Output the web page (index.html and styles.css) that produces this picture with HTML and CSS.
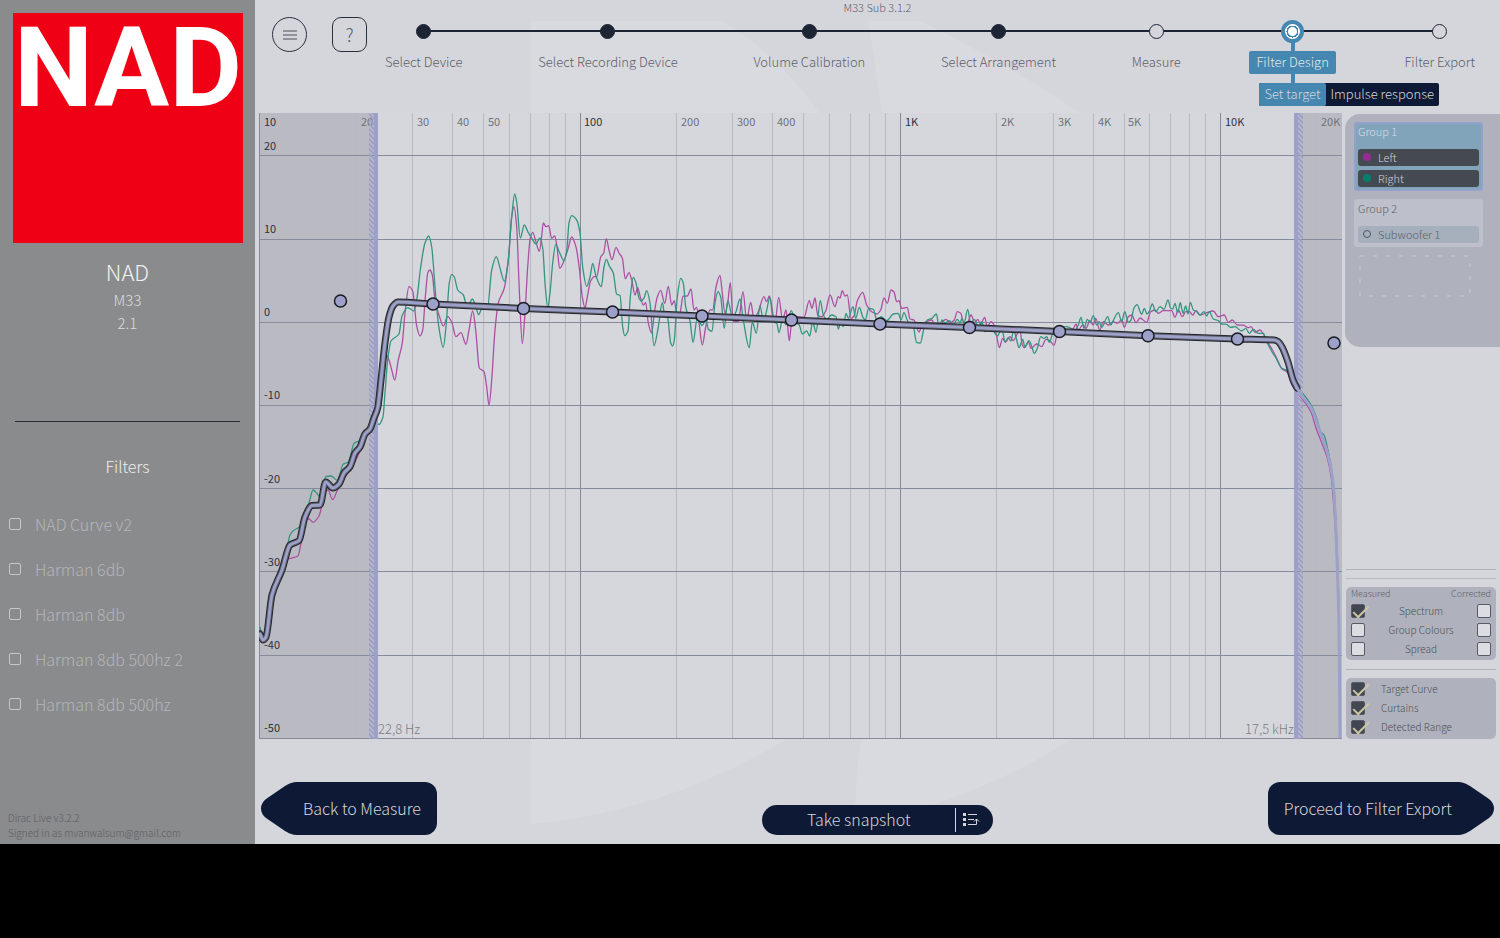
FILE: index.html
```html
<!DOCTYPE html>
<html lang="en">
<head>
<meta charset="utf-8">
<title>Dirac Live - Filter Design</title>
<link rel="stylesheet" href="styles.css">
</head>
<body>
<div class="app">
  <aside class="sidebar">
    <div class="logo" role="img" aria-label="NAD"><span class="logo-text">NAD</span></div>
    <h1 class="device-brand">NAD</h1>
    <p class="device-line">M33</p>
    <p class="device-line">2.1</p>
    <hr class="side-rule">
    <h2 class="filters-title">Filters</h2>
    <ul class="filters">
      <li><label class="filter"><input type="checkbox" class="filter-box"><span>NAD Curve v2</span></label></li>
      <li><label class="filter"><input type="checkbox" class="filter-box"><span>Harman 6db</span></label></li>
      <li><label class="filter"><input type="checkbox" class="filter-box"><span>Harman 8db</span></label></li>
      <li><label class="filter"><input type="checkbox" class="filter-box"><span>Harman 8db 500hz 2</span></label></li>
      <li><label class="filter"><input type="checkbox" class="filter-box"><span>Harman 8db 500hz</span></label></li>
    </ul>
    <footer class="account">Dirac Live v3.2.2<br>Signed in as mvanwalsum@gmail.com</footer>
  </aside>

  <main class="main">
    <svg class="watermark" viewBox="255 0 1245 844" preserveAspectRatio="none" aria-hidden="true">
      <path d="M531 21H722C830 85 905 230 905 410C905 570 860 690 785 740C700 790 620 815 531 824Z"/>
      <path d="M868 21H920C960 40 1030 78 1080 113C1190 190 1240 300 1240 420C1240 560 1170 680 1070 740C1010 778 930 812 855 824C855 790 858 760 861 740C910 520 910 260 868 21Z"/>
    </svg>

    <header class="header">
      <p class="project">M33 Sub 3.1.2</p>
      <div class="nav-row">
        <button class="round-btn round-btn--circle" aria-label="Menu">
          <svg width="16" height="10" viewBox="0 0 16 10"><path d="M1 1H15M1 5H15M1 9H15"/></svg>
        </button>
        <button class="round-btn" aria-label="Help">?</button>
        <ol class="steps">
          <li class="step"><span class="dot-area"><i class="dot dot--done"></i></span><a class="step-label" href="#device">Select Device</a></li>
          <li class="step"><span class="dot-area"><i class="dot dot--done"></i></span><a class="step-label" href="#recording">Select Recording Device</a></li>
          <li class="step"><span class="dot-area"><i class="dot dot--done"></i></span><a class="step-label" href="#volume">Volume Calibration</a></li>
          <li class="step"><span class="dot-area"><i class="dot dot--done"></i></span><a class="step-label" href="#arrangement">Select Arrangement</a></li>
          <li class="step"><span class="dot-area"><i class="dot"></i></span><a class="step-label" href="#measure">Measure</a></li>
          <li class="step step--active">
            <span class="dot-area"><i class="dot dot--active"></i></span><a class="step-label" href="#design" aria-current="step">Filter Design</a>
            <div class="tabs"><button class="tab tab--on">Set target</button><button class="tab">Impulse response</button></div>
          </li>
          <li class="step"><span class="dot-area"><i class="dot"></i></span><a class="step-label" href="#export">Filter Export</a></li>
        </ol>
      </div>
    </header>

    <div class="workspace">
      <svg class="chart" viewBox="259 113 1083 626" role="img" aria-label="Frequency response with target curve">
        <defs>
          <pattern id="hatch" width="5" height="5" patternUnits="userSpaceOnUse">
            <path d="M0 0L5 5M-1 4L1 6M4 -1L6 1" stroke="#9da1c9" stroke-width="2"/>
          </pattern>
        </defs>
        <rect class="shade" x="259" y="113" width="115" height="626"/>
        <rect class="shade" x="1298" y="113" width="44" height="626"/>
        <g id="grid"></g>
        <g class="labels">
          <text class="strong" x="264" y="126">10</text>
          <text x="361" y="126">20</text><text x="417" y="126">30</text><text x="457" y="126">40</text><text x="488" y="126">50</text>
          <text class="strong" x="584" y="126">100</text>
          <text x="681" y="126">200</text><text x="737" y="126">300</text><text x="777" y="126">400</text>
          <text class="strong" x="905" y="126">1K</text>
          <text x="1001" y="126">2K</text><text x="1058" y="126">3K</text><text x="1098" y="126">4K</text><text x="1128" y="126">5K</text>
          <text class="strong" x="1225" y="126">10K</text>
          <text x="1321" y="126">20K</text>
          <text class="strong" x="264" y="150">20</text><text class="strong" x="264" y="233">10</text><text class="strong" x="264" y="316">0</text>
          <text class="strong" x="264" y="399">-10</text><text class="strong" x="264" y="483">-20</text><text class="strong" x="264" y="566">-30</text>
          <text class="strong" x="264" y="649">-40</text><text class="strong" x="264" y="732">-50</text>
        </g>
        <path id="curve-left" class="curve curve--left"/>
        <path id="curve-right" class="curve curve--right"/>
        <rect x="369" y="113" width="5" height="626" fill="url(#hatch)"/>
        <rect class="curtain" x="374" y="113" width="4" height="626"/>
        <rect class="curtain" x="1294" y="113" width="4" height="626"/>
        <rect x="1298" y="113" width="5" height="626" fill="url(#hatch)"/>
        <path id="target-edge" class="target-edge"/>
        <path id="target-band" class="target-band"/>
        <path id="target-core" class="target-core"/>
        <path id="target-tail" class="target-core"/>
        <g id="knobs"></g>
        <text class="limit" x="378" y="734">22,8 Hz</text>
        <text class="limit" x="1294" y="734" text-anchor="end">17,5 kHz</text>
      </svg>

      <aside class="panel">
        <div class="groups">
          <section class="group group--on">
            <h3 class="group-name">Group 1</h3>
            <button class="channel"><i class="swatch swatch--left"></i>Left</button>
            <button class="channel"><i class="swatch swatch--right"></i>Right</button>
          </section>
          <section class="group">
            <h3 class="group-name">Group 2</h3>
            <button class="channel"><i class="swatch"></i>Subwoofer 1</button>
          </section>
          <svg class="dropzone" viewBox="0 0 112 42" aria-hidden="true"><rect x="1" y="1" width="110" height="40"/></svg>
        </div>
        <div class="options">
          <hr class="rule">
          <hr class="rule rule--second">
          <section class="box">
            <div class="cols"><span>Measured</span><span>Corrected</span></div>
            <div class="row"><input class="check" type="checkbox" id="m1" checked><label for="m1">Spectrum</label><input class="check" type="checkbox" aria-label="Spectrum, corrected"></div>
            <div class="row"><input class="check" type="checkbox" id="m2"><label for="m2">Group Colours</label><input class="check" type="checkbox" aria-label="Group Colours, corrected"></div>
            <div class="row"><input class="check" type="checkbox" id="m3"><label for="m3">Spread</label><input class="check" type="checkbox" aria-label="Spread, corrected"></div>
          </section>
          <hr class="rule rule--mid">
          <section class="box box--view">
            <div class="row row--view"><input class="check" type="checkbox" id="v1" checked><label for="v1">Target Curve</label></div>
            <div class="row row--view"><input class="check" type="checkbox" id="v2" checked><label for="v2">Curtains</label></div>
            <div class="row row--view"><input class="check" type="checkbox" id="v3" checked><label for="v3">Detected Range</label></div>
          </section>
        </div>
      </aside>
    </div>

    <footer class="actions">
      <button class="arrow-btn">
        <svg class="tip" viewBox="0 0 38 53"><path d="M38 0C30 0 28 2 24 4L5 17Q0 21 0 26.500Q0 32 5 36L24 49C28 51 30 53 38 53Z"/></svg>
        <span class="arrow-body arrow-body--back">Back to Measure</span>
      </button>
      <div class="snapshot">
        <button class="snap-main">Take snapshot</button>
        <button class="snap-list" aria-label="Snapshot list">
          <svg width="18" height="14" viewBox="0 0 18 14">
            <path class="ico-fill" d="M1 0h3v3H1zM1 5h3v3H1zM1 10h3v3H1z"/>
            <path class="ico-line" d="M6 1.500H15M6 6.500H12M6 11.500H14.500V6M12 8.500L14.500 6L17 8.500"/>
          </svg>
        </button>
      </div>
      <button class="arrow-btn">
        <span class="arrow-body arrow-body--next">Proceed to Filter Export</span>
        <svg class="tip" viewBox="0 0 38 53"><path d="M0 0C8 0 10 2 14 4L33 17Q38 21 38 26.500Q38 32 33 36L14 49C10 51 8 53 0 53Z"/></svg>
      </button>
    </footer>
  </main>
</div>
<script src="chart.js"></script>
</body>
</html>
```
FILE: styles.css
```css
* { box-sizing: border-box; }
body {
  margin: 0;
  background: #000;
  font-family: "Noto Sans CJK SC", "Noto Sans", sans-serif;
  font-weight: 300;
  font-size: 13px;
  color: #5c606c;
}
h1, h2, h3, p, ul, ol { margin: 0; padding: 0; font-weight: 300; }
li { list-style: none; }
button { font: inherit; color: inherit; border: 0; padding: 0; background: none; cursor: pointer; }
a { color: inherit; text-decoration: none; }
hr { border: 0; margin: 0; }

.app { display: flex; min-height: 90vh; }

/* Sidebar */
.sidebar {
  width: 255px;
  flex: none;
  display: flex;
  flex-direction: column;
  padding: 13px 0 4px;
  background: #8a8b8d;
  color: #f0f0f0;
}
.logo { width: 230px; height: 230px; margin-left: 13px; background: #f00014; text-align: center; }
.logo-text { display: block; font: 700 112px/109px Roboto, "Liberation Sans", sans-serif; color: #fff; }
.device-brand { margin-top: 11px; font-size: 22px; line-height: 34px; text-align: center; }
.device-line { font-size: 15px; line-height: 23px; text-align: center; color: #dcdcdc; }
.side-rule { height: 1px; margin: 87px 15px 0 15px; background: #2c2d30; }
.filters-title { margin-top: 32px; font-size: 16px; line-height: 24px; text-align: center; }
.filters { margin-top: 23px; }
.filter { display: flex; align-items: center; gap: 14px; height: 45px; padding-left: 9px; font-size: 16px; color: #b3b5bb; }
.filter-box { appearance: none; width: 12px; height: 12px; margin: 0; border: 1px solid #c5c7cc; border-radius: 2px; }
.account { margin-top: auto; padding-left: 8px; font-size: 10px; line-height: 15px; color: #5c5e62; }

/* Main area */
.main {
  position: relative;
  flex: 1;
  min-width: 0;
  display: flex;
  flex-direction: column;
  background: #d5d6db;
}
.watermark { position: absolute; inset: 0; width: 100%; height: 100%; fill: #d9dadf; }
.header, .workspace, .actions { position: relative; }

.header { min-height: 113px; padding: 0 25px 0 17px; }
.project { margin: 0 -25px 0 -17px; padding-bottom: 2px; font-size: 11px; line-height: 14px; text-align: center; }
.nav-row { display: flex; align-items: flex-start; gap: 25px; }
.round-btn {
  display: grid;
  place-items: center;
  width: 35px;
  height: 35px;
  margin-top: 1px;
  padding-bottom: 2px;
  border: 1px solid #2a3040;
  border-radius: 9px;
  font-size: 18px;
  line-height: 20px;
}
.round-btn--circle { padding: 0; border-radius: 50%; }
.round-btn svg { fill: none; stroke: #4a4f5d; stroke-width: 1; }
.steps { position: relative; flex: 1; display: flex; justify-content: space-between; margin-left: -7px; }
.steps::before { content: ""; position: absolute; left: 39px; right: 35px; top: 14px; height: 2px; background: #1d2434; }
.step { position: relative; display: flex; flex-direction: column; align-items: center; }
.dot-area { display: grid; place-items: center; height: 30px; }
.dot { width: 15px; height: 15px; border: 1px solid #1d2434; border-radius: 50%; background: #d5d6db; }
.dot--done { background: #1d2434; }
.dot--active { width: 23px; height: 23px; border: 4px solid #4587b0; background: radial-gradient(circle, #fff 0 4px, #4587b0 5px 6px, #fff 6px); }
.step-label { margin-top: 5px; padding-bottom: 1px; font-size: 13px; line-height: 22px; white-space: nowrap; }
.step--active { margin: 0 -7px; }
.step--active::before { content: ""; position: absolute; top: 20px; bottom: -10px; width: 4px; background: #4587b0; }
.step--active .dot-area, .step--active .step-label { position: relative; }
.step--active .step-label { padding: 0 7px 1px; border-radius: 2px; background: #4587b0; color: #e2e6ee; }
.tabs { position: absolute; top: 67px; left: 10px; display: flex; border-radius: 2px; overflow: hidden; background: #0e1a35; color: #d5d6db; }
.tab { height: 23px; padding: 0 5px 2px; line-height: 21px; white-space: nowrap; }
.tab--on { border-radius: 2px; background: #4587b0; }

/* Chart */
.workspace { display: grid; grid-template-columns: 1fr 155px; gap: 3px; padding-left: 4px; }
.chart { display: block; width: 100%; background: #d6d7dc; }
.shade { fill: #babbc2; }
.grid-minor { stroke: #b7b9c2; stroke-width: 1; }
.grid-major { stroke: #868b9c; stroke-width: 1; }
.labels { font-size: 11px; font-weight: 400; fill: #6f727c; }
.strong { fill: #2c3140; }
.curve { fill: none; stroke-width: 1.3; stroke-linejoin: round; }
.curve--left { stroke: #ab50a3; }
.curve--right { stroke: #35947f; }
.curtain { fill: #9da1c9; }
.target-edge, .target-band, .target-core { fill: none; stroke-linejoin: round; stroke-linecap: round; }
.target-edge { stroke: #24262e; stroke-width: 7; }
.target-band { stroke: #5c5e6a; stroke-width: 5; }
.target-core { stroke: #9da1c9; stroke-width: 3; }
.knob { fill: #9da1c9; stroke: #191b22; stroke-width: 1.5; }
.limit { font-size: 13px; fill: #7a7d87; }

/* Right panel */
.panel { display: flex; flex-direction: column; justify-content: space-between; font-size: 11px; }
.groups { margin-top: 1px; min-height: 233px; padding: 8px 17px 8px 9px; border-radius: 15px 0 0 15px; background: #afb2bd; }
.group { display: flex; flex-direction: column; gap: 4px; margin-bottom: 8px; padding: 4px; border-radius: 3px; background: #bdc0ca; }
.group--on { padding: 2px; border: 2px solid #93a1cc; background: #82a4bb; color: #d9dee8; }
.group-name { height: 19px; font-size: 11px; line-height: 10px; }
.channel { display: flex; align-items: center; gap: 7px; height: 17px; padding: 0 0 1px 5px; border-radius: 3px; background: #a6b0bd; line-height: 14px; }
.group--on .channel { background: #454952; color: #cfd1d8; }
.swatch { width: 8px; height: 8px; border: 1px solid #50545f; border-radius: 50%; }
.swatch--left { border: 0; background: #992a92; }
.swatch--right { border: 0; background: #00806a; }
.dropzone { display: block; width: 112px; margin-left: 5px; fill: none; stroke: #c8cad2; stroke-dasharray: 4 9; }

.options { padding: 0 4px 0 1px; }
.rule { height: 1px; background: #b0b2bb; }
.rule--second { margin: 8px 0; background: #b9bbc3; }
.rule--mid { margin: 9px 0 8px; }
.box { padding: 0 5px 2px; border-radius: 5px; background: #afb2bd; }
.box--view { padding: 1px 5px 3px; }
.cols { display: flex; justify-content: space-between; height: 14px; font-size: 9px; line-height: 13px; }
.row { display: flex; align-items: center; justify-content: space-between; height: 19px; font-size: 10px; line-height: 19px; color: #4c505b; }
.row--view { justify-content: flex-start; gap: 16px; }
.check { appearance: none; position: relative; width: 14px; height: 14px; margin: 0; border: 1px solid #585b63; border-radius: 2px; background: #dcdde2; }
.check:checked { background: #414650; }
.check:checked::after { content: ""; position: absolute; left: 5px; top: -3px; width: 6px; height: 14px; border: solid #cbc6a3; border-width: 0 2px 2px 0; transform: rotate(45deg); }

/* Bottom actions */
.actions { display: flex; flex: 1; justify-content: space-between; align-items: flex-end; padding: 43px 6px 9px; color: #d5d6db; }
.arrow-btn { display: flex; height: 53px; font-size: 16px; }
.tip { width: 38px; height: 53px; flex: none; fill: #0e1a35; }
.arrow-body { height: 53px; line-height: 52px; background: #0e1a35; }
.arrow-body--back { padding: 0 16px 0 4px; border-radius: 0 12px 12px 0; }
.arrow-body--next { padding: 0 4px 0 16px; border-radius: 12px 0 0 12px; }
.snapshot { display: flex; align-items: center; height: 30px; margin-left: 51px; border-radius: 15px; background: #0e1a35; }
.snap-main { width: 193px; padding-bottom: 2px; font-size: 16px; line-height: 28px; }
.snap-list { display: grid; align-items: center; height: 24px; width: 38px; padding-left: 6px; border-left: 1px solid #d5d6db; }
.ico-fill { fill: #d5d6db; }
.ico-line { fill: none; stroke: #d5d6db; stroke-width: 1; }
```
FILE: chart.js
```js
const NS = "http://www.w3.org/2000/svg";
const TOP = 113, BOTTOM = 739;

function add(parent, name, attrs) {
  const el = document.createElementNS(NS, name);
  for (const key in attrs) el.setAttribute(key, attrs[key]);
  parent.appendChild(el);
}

function parse(text) {
  return text.trim().split(/\s+/).map(p => p.split(",").map(Number));
}

// Monotone cubic interpolation: peaks stay at the given points.
function smooth(p) {
  const n = p.length, s = [], m = [];
  for (let i = 0; i < n - 1; i++) s.push((p[i + 1][1] - p[i][1]) / (p[i + 1][0] - p[i][0]));
  for (let i = 0; i < n; i++) {
    if (i === 0) m.push(s[0]);
    else if (i === n - 1) m.push(s[n - 2]);
    else m.push(s[i - 1] * s[i] <= 0 ? 0 : 2 * s[i - 1] * s[i] / (s[i - 1] + s[i]));
  }
  let d = "M" + p[0];
  for (let i = 0; i < n - 1; i++) {
    const h = (p[i + 1][0] - p[i][0]) / 3;
    d += `C${p[i][0] + h} ${p[i][1] + m[i] * h} ${p[i + 1][0] - h} ${p[i + 1][1] - m[i + 1] * h} ${p[i + 1]}`;
  }
  return d;
}

const grid = document.getElementById("grid");
for (let decade = 0; decade < 4; decade++) {
  for (let k = 1; k < 10; k++) {
    const x = Math.round(259.4 + 320.2 * (decade + Math.log10(k))) + 0.5;
    if (x < 1340) add(grid, "line", { x1: x, x2: x, y1: TOP, y2: BOTTOM, class: k === 1 ? "grid-major" : "grid-minor" });
  }
}
for (const y of [155.5, 239.5, 322.5, 405.5, 488.5, 571.5, 655.5, 738.5]) {
  add(grid, "line", { x1: 259, x2: 1342, y1: y, y2: y, class: "grid-major" });
}

const left = parse(`
260,634 263,641 266,638 272,596 282,571 286,560 289,558.7 298,556 301,543 305,520 309,519 313,522.3 319,516 322,505
325,492 328,490 332.7,499.7 337,491 342,481.700 348,473 355,461.7 361,448 365,435 370,429 374,410 378,400 381.7,376
386,355 389,360 392,371 394.7,380 398.3,360 402.3,343 405,313 409,286.7 412.7,291 416.7,326 420,336 422.7,330 425.3,297
428,272 430,270 432.3,275 435,300 439,315 443.3,326 447.7,316.7 451.7,322 456,336.7 461,332.7 466,344.3 469,330 472.7,311
475.7,330 479.3,368 484,371.7 486.7,387 489,405.3 491.7,380 495,330 498.3,303 504.3,288 508.3,260 511.7,217 514,206.7
516.7,227 519.3,290 522.3,343.7 525,313 527.7,267 530.3,238 532.7,232.3 535.7,241 539.3,251.3 541.7,236 543.3,223 546,226.7
548.7,225.7 551.7,238.3 554.7,236 557,247 559.7,268.3 564,260.7 567.7,250 571.7,237 576,247 579.3,268 582.3,297 585,307.7
587.3,297 590.7,281 594.3,276.7 596.7,276.6 600.7,257 603.7,253 606.3,238.7 609,250 612,259.7 616,247.3 619,253 622.3,258
625.3,278.7 629,272.7 631.7,280 635,295 637.7,287.7 640.3,297 643.3,305 645.7,302.7 648.3,323 651.7,333 654.3,313 657.3,297
660.7,290.3 664.7,303.3 668.3,286.3 671.7,305 674.3,300.7 677,315 680,313 683,296.2 687.3,296 691,289 694,310 696.7,307.3
699.3,325 702.3,345 705.7,327 710,310 712.7,309.9 716,287 720,275.3 722.3,293 725,313.3 727.7,303 730.3,282.7 733.3,321.7
738.3,321.6 743,291.7 746.7,320 750.7,302.3 754,318.3 758.3,311.7 764,296.7 766.7,301.7 769.3,296 775,322.7 778.7,297.3
782.7,320 786,310 789.3,340.7 791.7,321.7 796.7,316.7 804,317.3 809.3,300.7 812,308.3 815,298 817.7,315 821.7,316.7 825.7,311
830,295 835,306.7 838.3,296.7 840,298 842.3,290.7 845,296 847.3,295 851,318.3 854,316 857.3,301 862.7,292.3 866.7,305
871.7,311.7 876.7,314 880.7,310 884,298 887.3,303.3 891,290 894,292 896.7,301.7 899,300.7 901.7,308.3 907.3,307.3 910,319
914,320 919,332 922.7,323 926.7,321.7 931.7,320 937,329 941,323 946,319.3 950,322.7 954.3,320 957.3,311.7 960.7,313.3
963.3,321.7 966.7,325 971,315 975,323.3 977.7,319.3 980.7,324.3 984.7,317.3 987.3,326.7 991,321.7 994,325 996.7,336
999.3,347.7 1002.7,338.3 1005.3,342.3 1010,336.7 1013.3,340.7 1016.7,335 1020,330.7 1022.3,345 1024.3,347.7 1028.3,341.7
1031,348.3 1036.7,344 1041.7,346.7 1046,339.3 1050,340.7 1054,345.3 1057.3,335 1066.7,330 1073,329 1076,324 1078.3,330
1082.7,325 1086,328.3 1090,320.7 1093.3,325 1095.7,318.3 1099.7,330 1103.3,321.7 1108.3,325 1113.3,321.7 1117.3,323.3
1121.7,320 1124.3,327.3 1128.3,316.7 1131.7,315 1136,322.7 1140,318 1146.7,322.3 1150.7,311.7 1155,310 1158.3,313.3
1163.3,310.7 1171.7,310.6 1175,317.3 1178.3,310 1182.3,316.7 1185.7,311.7 1189.5,311.6 1192.7,315 1196,310.7 1200,315
1206.7,312.7 1213.3,311 1218.3,316.7 1224.3,315 1228.3,322.3 1232.3,320 1237.3,325 1243.3,325.1 1248.3,327.7 1251,326.7
1255,332.3 1260,330 1263.3,334 1267,341 1273,351 1278,361 1282,369 1287,372 1291.7,384 1296,391 1303,400 1311,412
1316,428 1321,441 1327,457 1331,476 1333,496 1337,560 1339,627 1340,737`);

const right = parse(`
260,627 263,639 266,636 272,595 282,570 286,555 290,535 293.3,530.7 299.3,527 305,515 309,503 313,490 316.7,493 320,497.3
322.7,488 326,476.5 331,476 337.3,480.3 343.3,464 348.3,462 354.3,443 359,441 365,432.7 370,426.7 374.3,420 379,424.500
383,416.7 385,393 387.7,360 391,341 399,334 402,316 407.7,307.7 414,311 416.7,300 420.7,267 425,243 428.7,236 431.7,247
435,287 438.3,323 443.3,347.3 446,327 449.3,283 451.7,274.3 454.3,277 457.7,290 463.3,295 467.3,307.7 472.3,299 475.3,305
478.7,314.7 482,308.3 487.3,309.3 491.7,270 496.3,256.7 500,268 504.3,281.3 508.3,260 511.7,217 514.7,194 516.7,202
520.3,238 524.3,225 528.3,232.7 531.7,238 536,244 540,238 542.7,248 545.3,287 547.7,307.3 550,293 552.7,263 555.7,244.3
559.3,252 564,260.7 566.7,251 569,223 571.7,215.7 576.7,220 580,233 582.7,267 586.7,286.3 590,277 592.7,263.3 595.7,275
601.3,286.7 604,267 606.3,259.3 609.3,266 613.3,273 616.7,294.3 620,295.3 622.7,327 624.7,335.7 628,331 630.3,297 633.3,277.3
636,283 639,298 641.3,301 644,298 646.7,290.7 650,303 654,345.7 658.3,327 662.3,302.7 664.3,313 667.7,318 670.7,343
672.7,346 674.3,340 677.3,297 680.7,278.3 683.3,283 685.7,307 690,321 693,342.3 697.3,318.3 702,325.500 706,320 708.3,329.3
712,331.3 715,303 718,291.7 720.7,297 724.3,328.3 727.7,300.7 732.7,317.3 736,311.7 740,299 743.3,320 749.3,347.7 752.3,322
756.3,333.3 760,305.7 763.3,320 766,313.3 770,297.3 773.3,321.7 776.7,323.3 779,332.7 782.7,318.3 786,325 791.3,310.7
795,321.7 799.3,325 802.3,334 806.7,331 809.7,336 812.7,321.7 816,332.3 820.3,300.7 823.3,315 826.7,319.3 831.7,315
836,316.7 838.3,329 841,321.7 843.3,326.7 846,313.3 848.3,318.3 853,306.7 855.7,318.3 859.3,307.3 862.7,316.7 865.3,320
868.7,308.3 873.3,309.3 877.3,321.7 881,316.7 886.7,320.7 893.3,314 898.3,313.3 901,320 904,312.7 908,321.7 913.3,326.7
916.7,342.7 920.3,343 924,328.3 927.3,320 932,318.3 936.5,314 939,328.3 942,320 945,322.7 949.3,320.7 953.3,325 957.3,319.3
960,322.7 962,318.3 964,323.3 967.7,309.3 970.7,323.3 974.3,319.3 978.3,326.7 981.7,321.7 985,331.7 988.3,330 991.7,326
995,333.3 997.7,336 1000,331.7 1002.3,331 1005,341.7 1008.3,337.7 1011,341 1013.7,330 1016.3,338.3 1019,347.7 1022.7,339.3
1025,347.3 1029,340.7 1031.3,345 1034.3,353.3 1037.3,348.3 1040.7,336.7 1044,338.3 1046.7,336.7 1049.3,342.3 1052.7,333.3
1056.7,327.3 1066.7,326.7 1075,330 1078.3,325 1081,317.3 1084,328.3 1087.3,319.3 1090,322.7 1093.3,315.7 1096.7,325
1099.3,321.7 1101.7,327.3 1107.7,316.7 1110.7,325 1114.3,318.3 1118.3,312.7 1121.7,321.7 1124.7,311.7 1128.3,322.3
1131,320 1134,308 1137,304.7 1141.7,314.3 1144.3,308.3 1147,314 1149.5,311 1152.3,304 1155.7,311.7 1160,306.7 1164,309.3
1168,300 1170.7,308.3 1172.7,309 1175,303.3 1177.7,312.7 1180.3,302.7 1183,313.3 1185.7,306 1188,314 1190.3,302.3
1193.3,310 1196.7,311.7 1200,315 1204,311.7 1206.7,316 1209.3,311.7 1213.3,319 1218.3,320.7 1221.7,324 1226,324.1
1230.7,327.3 1235,326.7 1241.7,331 1245.7,328.3 1249.3,333.3 1253.3,329.3 1258.3,333.3 1263.3,333.4 1266.7,341.7
1272,351.7 1276.7,359.3 1281.7,368.3 1287.3,370.7 1291.7,380 1300,390 1311.7,406 1316.7,418.3 1320.7,431.7 1324,435
1328.3,451.7 1331.7,470 1334.3,493 1337.5,560 1339.300,627 1340,737`);

const target = parse(`
260,634 263,640 266,637 272,595 282,570 290,545 299,540.7 305,517 312,505.5 320,505 325.7,482 333,488 339,484 344,473
350,466.7 355,453 360,447 365,434 370,429 374,418 377.7,408 381,380 385,343 389,317 393,306 398,302 433,304 523.5,308.5
612.5,312 702,316 791,320 880,324 969.5,327.500 1059,331.5 1148,335.8 1237.5,339 1274,340 1278,341.5 1282,347 1288,362 1293,380 1297,388`);

const tail = parse(`
1297,388 1303,397 1311.7,409 1317,423 1322,437 1327.5,453 1331.7,473 1334,493 1337,560 1339,627 1340,737`);

const set = (id, pts) => document.getElementById(id).setAttribute("d", smooth(pts));
set("curve-left", left);
set("curve-right", right);
set("target-edge", target);
set("target-band", target);
set("target-core", target);
set("target-tail", tail);

const knobs = document.getElementById("knobs");
for (const [cx, cy] of parse(`340.5,301 433,304 523.5,308.5 612.5,312 702,316 791.500,320 880,324 969.5,327.500
  1059.5,331.5 1148,335.8 1237.5,339 1334,343`)) {
  add(knobs, "circle", { cx, cy, r: 6, class: "knob" });
}
```
